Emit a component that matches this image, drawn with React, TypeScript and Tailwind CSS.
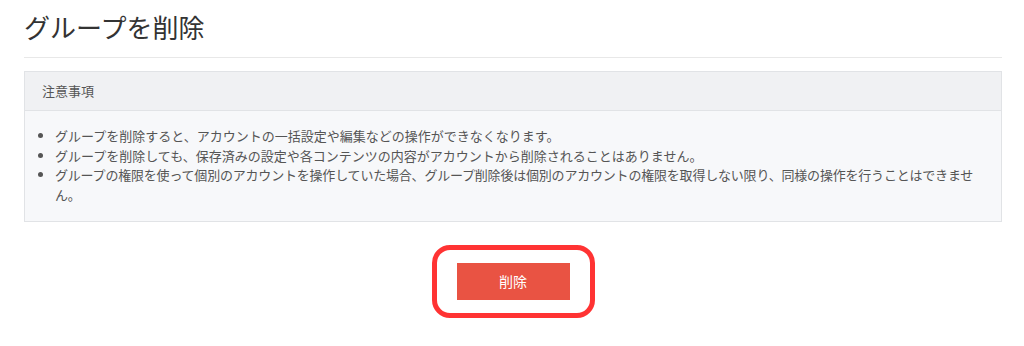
export default function App() {
  const notes = [
    { text: "グループを削除すると、アカウントの一括設定や編集などの操作ができなくなります。", cls: "" },
    { text: "グループを削除しても、保存済みの設定や各コンテンツの内容がアカウントから削除されることはありません。", cls: "" },
    {
      text: "グループの権限を使って個別のアカウントを操作していた場合、グループ削除後は個別のアカウントの権限を取得しない限り、同様の操作を行うことはできません。",
      cls: "tracking-[-0.2px]",
    },
  ];

  return (
    <div className="w-[1024px] h-[346px] bg-white pl-6 pr-[22px] pt-[12px] font-['Noto_Sans_CJK_JP','Noto_Sans',sans-serif] text-[#555]">
      {/* タイトル */}
      <div className="border-b border-[#e8e8e8] pb-[15px]">
        <h1 className="text-[26px] leading-[30px] text-[#333] font-normal">
          グループを削除
        </h1>
      </div>

      {/* 注意事項 */}
      <div className="mt-[13px] border border-[#e1e3e6]">
        <div className="h-[39px] flex items-center px-[17px] bg-[#f0f1f3] border-b border-[#e1e3e6] text-[13px]">
          注意事項
        </div>
        <div className="bg-[#f7f8fa] pl-[30px] pr-[17px] pt-[15px] pb-[17px]">
          <ul className="list-disc text-[13px] leading-[19.5px]">
            {notes.map((n) => (
              <li key={n.text} className={n.cls}>
                {n.text}
              </li>
            ))}
          </ul>
        </div>
      </div>

      {/* 削除ボタン */}
      <div className="flex justify-center mt-[23px]">
        <div className="border-[5px] border-[#ff3333] rounded-[18px] px-[20px] py-[13px]">
          <button className="w-[113px] h-[37px] bg-[#e95343] text-white text-[14px]">
            削除
          </button>
        </div>
      </div>
    </div>
  );
}
